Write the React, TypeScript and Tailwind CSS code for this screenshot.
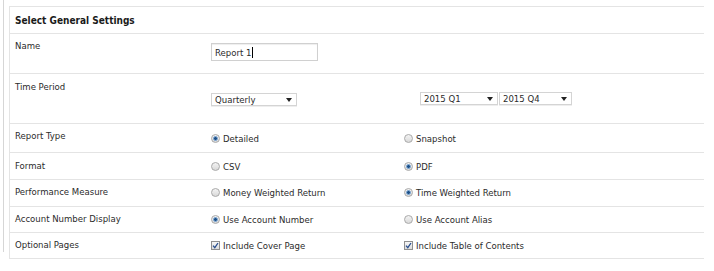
import React from "react";

const font = { fontFamily: "'DejaVu Sans Condensed', 'DejaVu Sans', Tahoma, sans-serif" };

function Radio({ checked, label }: { checked?: boolean; label: string }) {
  return (
    <div className="flex items-center gap-[3px] leading-[11px]">
      <span className="w-[9px] h-[9px] rounded-full border border-[#a9a9a9] bg-gradient-to-b from-[#f4f4f4] to-[#d9d9d9] flex items-center justify-center shrink-0">
        {checked && <span className="w-[5px] h-[5px] rounded-full bg-[#1d4f86] border border-[#7fa9d6]" />}
      </span>
      <span>{label}</span>
    </div>
  );
}

function Check({ label }: { label: string }) {
  return (
    <div className="flex items-center gap-[3px] leading-[11px]">
      <span className="w-[9px] h-[9px] border border-[#8f8f8f] bg-gradient-to-b from-[#f7f7f7] to-[#dcdcdc] flex items-center justify-center shrink-0">
        <svg width="7" height="7" viewBox="0 0 7 7">
          <path d="M1 3.6 L2.8 5.6 L6 1" stroke="#2a4f8f" strokeWidth="1.3" fill="none" />
        </svg>
      </span>
      <span>{label}</span>
    </div>
  );
}

function Select({ w, text }: { w: string; text: string }) {
  return (
    <div className={`${w} h-[13px] border border-[#d4d4d4] bg-white flex items-center justify-between pl-[3px] pr-[4px] leading-[11px] shadow-[0_1px_0_#eee]`}>
      <span>{text}</span>
      <svg width="6" height="4" viewBox="0 0 6 4">
        <path d="M0 0 H6 L3 4 Z" fill="#222" />
      </svg>
    </div>
  );
}

function Row({
  h,
  lpt,
  label,
  children,
}: {
  h: string;
  lpt: string;
  label: string;
  children: React.ReactNode;
}) {
  return (
    <div className={`flex ${h} border-b border-[#e4e4e4]`}>
      <div className={`w-[201px] pl-[5px] ${lpt} leading-[11px] shrink-0`}>{label}</div>
      {children}
    </div>
  );
}

export default function App() {
  return (
    <div className="flex bg-white w-[714px] h-[271px] text-[9.5px] text-[#2b2b2b]" style={font}>
      <div className="w-px h-[252px] bg-[#d6d6d6] ml-[3px] shrink-0" />
      <div className="ml-[5px] mt-[6px] w-[695px] h-[253px] border-t border-l border-[#e4e4e4] self-start">
        <div className="h-[27px] border-b border-[#e4e4e4] pl-[5px] pt-[8px] text-[10px] font-bold text-[#1a1a1a] leading-[12px]">
          Select General Settings
        </div>
        <Row h="h-[40px]" lpt="pt-[6px]" label="Name">
          <div className="pt-[9px]">
            <div className="w-[107px] h-[18px] border border-[#d0d0d0] bg-white flex items-center pl-[3px] shadow-[inset_0_1px_1px_#eee]">
              <span className="leading-[11px]">Report 1</span>
              <span className="w-px h-[11px] bg-black ml-[1px]" />
            </div>
          </div>
        </Row>
        <Row h="h-[50px]" lpt="pt-[7px]" label="Time Period">
          <div className="w-[193px] pt-[19px] shrink-0">
            <Select w="w-[86px]" text="Quarterly" />
          </div>
          <div className="pl-[16px] pt-[18px] flex gap-[1px]">
            <Select w="w-[78px]" text="2015 Q1" />
            <Select w="w-[73px]" text="2015 Q4" />
          </div>
        </Row>
        <Row h="h-[29px]" lpt="pt-[6px]" label="Report Type">
          <div className="w-[193px] pt-[9px] shrink-0">
            <Radio checked label="Detailed" />
          </div>
          <div className="pt-[9px]">
            <Radio label="Snapshot" />
          </div>
        </Row>
        <Row h="h-[27px]" lpt="pt-[7px]" label="Format">
          <div className="w-[193px] pt-[8px] shrink-0">
            <Radio label="CSV" />
          </div>
          <div className="pt-[8px]">
            <Radio checked label="PDF" />
          </div>
        </Row>
        <Row h="h-[27px]" lpt="pt-[6px]" label="Performance Measure">
          <div className="w-[193px] pt-[7px] shrink-0">
            <Radio label="Money Weighted Return" />
          </div>
          <div className="pt-[7px]">
            <Radio checked label="Time Weighted Return" />
          </div>
        </Row>
        <Row h="h-[26px]" lpt="pt-[6px]" label="Account Number Display">
          <div className="w-[193px] pt-[7px] shrink-0">
            <Radio checked label="Use Account Number" />
          </div>
          <div className="pt-[7px]">
            <Radio label="Use Account Alias" />
          </div>
        </Row>
        <Row h="h-[26px]" lpt="pt-[6px]" label="Optional Pages">
          <div className="w-[193px] pt-[7px] shrink-0">
            <Check label="Include Cover Page" />
          </div>
          <div className="pt-[7px]">
            <Check label="Include Table of Contents" />
          </div>
        </Row>
      </div>
    </div>
  );
}
